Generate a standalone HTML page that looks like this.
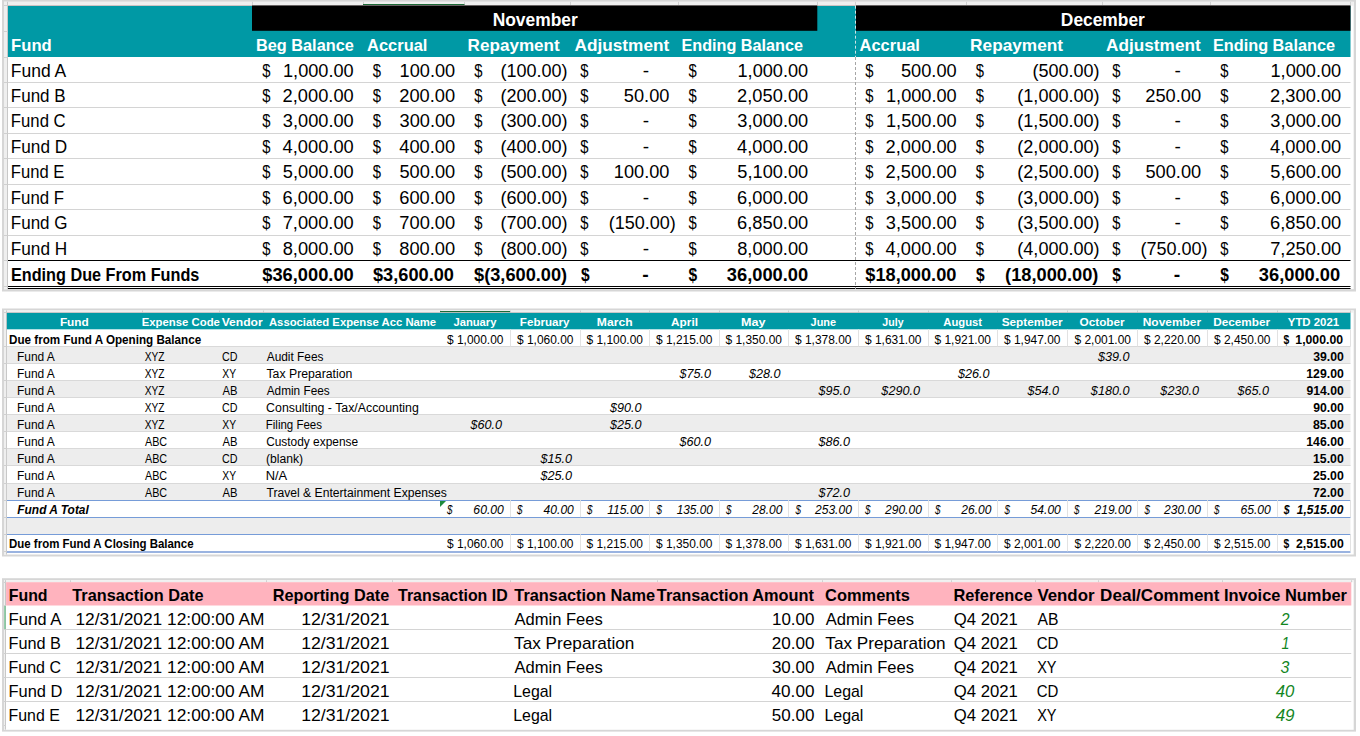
<!DOCTYPE html>
<html><head><meta charset="utf-8"><style>
html,body{margin:0;padding:0;background:#fff;width:1360px;height:736px;overflow:hidden}
svg{display:block}
text{font-family:"Liberation Sans",sans-serif}
</style></head><body>
<svg width="1360" height="736" viewBox="0 0 1360 736">
<rect x="2.00" y="0.00" width="1354.00" height="291.50" fill="#d6d6d6"/>
<rect x="4.00" y="1.80" width="1349.70" height="287.40" fill="#ffffff"/>
<rect x="4.00" y="1.80" width="1349.70" height="3.90" fill="#efefef"/>
<rect x="4.00" y="1.80" width="3.50" height="287.40" fill="#efefef"/>
<rect x="252.00" y="1.80" width="1.00" height="3.90" fill="#d0d0d0"/>
<rect x="363.00" y="1.80" width="1.00" height="3.90" fill="#d0d0d0"/>
<rect x="464.00" y="1.80" width="1.00" height="3.90" fill="#d0d0d0"/>
<rect x="570.00" y="1.80" width="1.00" height="3.90" fill="#d0d0d0"/>
<rect x="678.00" y="1.80" width="1.00" height="3.90" fill="#d0d0d0"/>
<rect x="817.00" y="1.80" width="1.00" height="3.90" fill="#d0d0d0"/>
<rect x="855.00" y="1.80" width="1.00" height="3.90" fill="#d0d0d0"/>
<rect x="966.00" y="1.80" width="1.00" height="3.90" fill="#d0d0d0"/>
<rect x="1102.00" y="1.80" width="1.00" height="3.90" fill="#d0d0d0"/>
<rect x="1210.00" y="1.80" width="1.00" height="3.90" fill="#d0d0d0"/>
<rect x="1350.00" y="1.80" width="1.00" height="3.90" fill="#d0d0d0"/>
<rect x="363.00" y="4.00" width="101.50" height="1.70" fill="#1d6b38"/>
<rect x="7.00" y="1.80" width="1.00" height="287.40" fill="#c8c8c8"/>
<rect x="8.00" y="6.00" width="1342.50" height="51.00" fill="#0099a5"/>
<rect x="8.00" y="5.00" width="1342.50" height="1.00" fill="#cdc3c3"/>
<rect x="252.00" y="5.50" width="565.30" height="25.30" fill="#000"/>
<rect x="856.00" y="5.50" width="494.50" height="25.30" fill="#000"/>
<rect x="8.00" y="82.00" width="1342.50" height="1.00" fill="#d4d4d4"/>
<rect x="4.00" y="82.00" width="3.50" height="1.00" fill="#d0d0d0"/>
<rect x="8.00" y="107.00" width="1342.50" height="1.00" fill="#d4d4d4"/>
<rect x="4.00" y="107.00" width="3.50" height="1.00" fill="#d0d0d0"/>
<rect x="8.00" y="133.00" width="1342.50" height="1.00" fill="#d4d4d4"/>
<rect x="4.00" y="133.00" width="3.50" height="1.00" fill="#d0d0d0"/>
<rect x="8.00" y="158.00" width="1342.50" height="1.00" fill="#d4d4d4"/>
<rect x="4.00" y="158.00" width="3.50" height="1.00" fill="#d0d0d0"/>
<rect x="8.00" y="184.00" width="1342.50" height="1.00" fill="#d4d4d4"/>
<rect x="4.00" y="184.00" width="3.50" height="1.00" fill="#d0d0d0"/>
<rect x="8.00" y="209.00" width="1342.50" height="1.00" fill="#d4d4d4"/>
<rect x="4.00" y="209.00" width="3.50" height="1.00" fill="#d0d0d0"/>
<rect x="8.00" y="235.00" width="1342.50" height="1.00" fill="#d4d4d4"/>
<rect x="4.00" y="235.00" width="3.50" height="1.00" fill="#d0d0d0"/>
<rect x="4.00" y="5.00" width="3.50" height="1.00" fill="#d0d0d0"/>
<rect x="4.00" y="31.00" width="3.50" height="1.00" fill="#d0d0d0"/>
<rect x="4.00" y="57.00" width="3.50" height="1.00" fill="#d0d0d0"/>
<rect x="4.00" y="260.00" width="3.50" height="1.00" fill="#d0d0d0"/>
<rect x="4.00" y="286.00" width="3.50" height="1.00" fill="#d0d0d0"/>
<rect x="8.00" y="260.00" width="1342.50" height="1.00" fill="#000"/>
<rect x="8.00" y="286.00" width="1342.50" height="1.00" fill="#000"/>
<rect x="8.00" y="288.00" width="1342.50" height="1.00" fill="#000"/>
<line x1="855.5" y1="5.7" x2="855.5" y2="57" stroke="#cfe3e5" stroke-width="1" stroke-dasharray="3,2"/>
<line x1="855.5" y1="57" x2="855.5" y2="289" stroke="#a6a6a6" stroke-width="1" stroke-dasharray="3,2"/>
<text x="492.63" y="25.60" font-size="17.5" textLength="85.18" lengthAdjust="spacingAndGlyphs" fill="#fff" font-weight="bold">November</text>
<text x="1060.84" y="25.60" font-size="17.5" textLength="84.03" lengthAdjust="spacingAndGlyphs" fill="#fff" font-weight="bold">December</text>
<text x="11.09" y="50.90" font-size="16.5" textLength="40.61" lengthAdjust="spacingAndGlyphs" fill="#fff" font-weight="bold">Fund</text>
<text x="255.91" y="50.90" font-size="16.5" textLength="97.90" lengthAdjust="spacingAndGlyphs" fill="#fff" font-weight="bold">Beg Balance</text>
<text x="367.09" y="50.90" font-size="16.5" textLength="60.32" lengthAdjust="spacingAndGlyphs" fill="#fff" font-weight="bold">Accrual</text>
<text x="467.61" y="50.90" font-size="16.5" textLength="92.10" lengthAdjust="spacingAndGlyphs" fill="#fff" font-weight="bold">Repayment</text>
<text x="574.57" y="50.90" font-size="16.5" textLength="94.64" lengthAdjust="spacingAndGlyphs" fill="#fff" font-weight="bold">Adjustment</text>
<text x="681.42" y="50.90" font-size="16.5" textLength="121.64" lengthAdjust="spacingAndGlyphs" fill="#fff" font-weight="bold">Ending Balance</text>
<text x="859.59" y="50.90" font-size="16.5" textLength="60.30" lengthAdjust="spacingAndGlyphs" fill="#fff" font-weight="bold">Accrual</text>
<text x="970.10" y="50.90" font-size="16.5" textLength="92.98" lengthAdjust="spacingAndGlyphs" fill="#fff" font-weight="bold">Repayment</text>
<text x="1106.07" y="50.90" font-size="16.5" textLength="94.64" lengthAdjust="spacingAndGlyphs" fill="#fff" font-weight="bold">Adjustment</text>
<text x="1212.91" y="50.90" font-size="16.5" textLength="122.15" lengthAdjust="spacingAndGlyphs" fill="#fff" font-weight="bold">Ending Balance</text>
<text x="10.79" y="76.50" font-size="17.5" textLength="55.45" lengthAdjust="spacingAndGlyphs" fill="#000">Fund A</text>
<text x="262.34" y="76.50" font-size="17.5" textLength="8.21" lengthAdjust="spacingAndGlyphs" fill="#000">$</text>
<text x="283.00" y="76.50" font-size="17.5" textLength="70.71" lengthAdjust="spacingAndGlyphs" fill="#000">1,000.00</text>
<text x="372.84" y="76.50" font-size="17.5" textLength="8.21" lengthAdjust="spacingAndGlyphs" fill="#000">$</text>
<text x="399.63" y="76.50" font-size="17.5" textLength="55.58" lengthAdjust="spacingAndGlyphs" fill="#000">100.00</text>
<text x="474.34" y="76.50" font-size="17.5" textLength="8.21" lengthAdjust="spacingAndGlyphs" fill="#000">$</text>
<text x="500.45" y="76.50" font-size="17.5" textLength="67.17" lengthAdjust="spacingAndGlyphs" fill="#000">(100.00)</text>
<text x="580.34" y="76.50" font-size="17.5" textLength="8.21" lengthAdjust="spacingAndGlyphs" fill="#000">$</text>
<text x="642.73" y="76.50" font-size="17.5" textLength="6.37" lengthAdjust="spacingAndGlyphs" fill="#000">-</text>
<text x="688.59" y="76.50" font-size="17.5" textLength="8.21" lengthAdjust="spacingAndGlyphs" fill="#000">$</text>
<text x="737.50" y="76.50" font-size="17.5" textLength="70.71" lengthAdjust="spacingAndGlyphs" fill="#000">1,000.00</text>
<text x="865.14" y="76.50" font-size="17.5" textLength="8.21" lengthAdjust="spacingAndGlyphs" fill="#000">$</text>
<text x="900.96" y="76.50" font-size="17.5" textLength="55.75" lengthAdjust="spacingAndGlyphs" fill="#000">500.00</text>
<text x="975.84" y="76.50" font-size="17.5" textLength="8.21" lengthAdjust="spacingAndGlyphs" fill="#000">$</text>
<text x="1032.45" y="76.50" font-size="17.5" textLength="67.17" lengthAdjust="spacingAndGlyphs" fill="#000">(500.00)</text>
<text x="1112.34" y="76.50" font-size="17.5" textLength="8.21" lengthAdjust="spacingAndGlyphs" fill="#000">$</text>
<text x="1174.48" y="76.50" font-size="17.5" textLength="6.37" lengthAdjust="spacingAndGlyphs" fill="#000">-</text>
<text x="1220.34" y="76.50" font-size="17.5" textLength="8.21" lengthAdjust="spacingAndGlyphs" fill="#000">$</text>
<text x="1270.50" y="76.50" font-size="17.5" textLength="70.71" lengthAdjust="spacingAndGlyphs" fill="#000">1,000.00</text>
<text x="10.80" y="101.94" font-size="17.5" textLength="54.85" lengthAdjust="spacingAndGlyphs" fill="#000">Fund B</text>
<text x="262.34" y="101.94" font-size="17.5" textLength="8.21" lengthAdjust="spacingAndGlyphs" fill="#000">$</text>
<text x="282.64" y="101.94" font-size="17.5" textLength="71.07" lengthAdjust="spacingAndGlyphs" fill="#000">2,000.00</text>
<text x="372.84" y="101.94" font-size="17.5" textLength="8.21" lengthAdjust="spacingAndGlyphs" fill="#000">$</text>
<text x="399.26" y="101.94" font-size="17.5" textLength="55.95" lengthAdjust="spacingAndGlyphs" fill="#000">200.00</text>
<text x="474.34" y="101.94" font-size="17.5" textLength="8.21" lengthAdjust="spacingAndGlyphs" fill="#000">$</text>
<text x="500.45" y="101.94" font-size="17.5" textLength="67.17" lengthAdjust="spacingAndGlyphs" fill="#000">(200.00)</text>
<text x="580.34" y="101.94" font-size="17.5" textLength="8.21" lengthAdjust="spacingAndGlyphs" fill="#000">$</text>
<text x="623.85" y="101.94" font-size="17.5" textLength="45.61" lengthAdjust="spacingAndGlyphs" fill="#000">50.00</text>
<text x="688.59" y="101.94" font-size="17.5" textLength="8.21" lengthAdjust="spacingAndGlyphs" fill="#000">$</text>
<text x="737.14" y="101.94" font-size="17.5" textLength="71.07" lengthAdjust="spacingAndGlyphs" fill="#000">2,050.00</text>
<text x="865.14" y="101.94" font-size="17.5" textLength="8.21" lengthAdjust="spacingAndGlyphs" fill="#000">$</text>
<text x="886.00" y="101.94" font-size="17.5" textLength="70.71" lengthAdjust="spacingAndGlyphs" fill="#000">1,000.00</text>
<text x="975.84" y="101.94" font-size="17.5" textLength="8.21" lengthAdjust="spacingAndGlyphs" fill="#000">$</text>
<text x="1017.32" y="101.94" font-size="17.5" textLength="82.30" lengthAdjust="spacingAndGlyphs" fill="#000">(1,000.00)</text>
<text x="1112.34" y="101.94" font-size="17.5" textLength="8.21" lengthAdjust="spacingAndGlyphs" fill="#000">$</text>
<text x="1145.26" y="101.94" font-size="17.5" textLength="55.95" lengthAdjust="spacingAndGlyphs" fill="#000">250.00</text>
<text x="1220.34" y="101.94" font-size="17.5" textLength="8.21" lengthAdjust="spacingAndGlyphs" fill="#000">$</text>
<text x="1270.14" y="101.94" font-size="17.5" textLength="71.07" lengthAdjust="spacingAndGlyphs" fill="#000">2,300.00</text>
<text x="10.83" y="127.38" font-size="17.5" textLength="54.81" lengthAdjust="spacingAndGlyphs" fill="#000">Fund C</text>
<text x="262.34" y="127.38" font-size="17.5" textLength="8.21" lengthAdjust="spacingAndGlyphs" fill="#000">$</text>
<text x="282.89" y="127.38" font-size="17.5" textLength="70.82" lengthAdjust="spacingAndGlyphs" fill="#000">3,000.00</text>
<text x="372.84" y="127.38" font-size="17.5" textLength="8.21" lengthAdjust="spacingAndGlyphs" fill="#000">$</text>
<text x="399.52" y="127.38" font-size="17.5" textLength="55.69" lengthAdjust="spacingAndGlyphs" fill="#000">300.00</text>
<text x="474.34" y="127.38" font-size="17.5" textLength="8.21" lengthAdjust="spacingAndGlyphs" fill="#000">$</text>
<text x="500.45" y="127.38" font-size="17.5" textLength="67.17" lengthAdjust="spacingAndGlyphs" fill="#000">(300.00)</text>
<text x="580.34" y="127.38" font-size="17.5" textLength="8.21" lengthAdjust="spacingAndGlyphs" fill="#000">$</text>
<text x="642.73" y="127.38" font-size="17.5" textLength="6.37" lengthAdjust="spacingAndGlyphs" fill="#000">-</text>
<text x="688.59" y="127.38" font-size="17.5" textLength="8.21" lengthAdjust="spacingAndGlyphs" fill="#000">$</text>
<text x="737.39" y="127.38" font-size="17.5" textLength="70.82" lengthAdjust="spacingAndGlyphs" fill="#000">3,000.00</text>
<text x="865.14" y="127.38" font-size="17.5" textLength="8.21" lengthAdjust="spacingAndGlyphs" fill="#000">$</text>
<text x="886.00" y="127.38" font-size="17.5" textLength="70.71" lengthAdjust="spacingAndGlyphs" fill="#000">1,500.00</text>
<text x="975.84" y="127.38" font-size="17.5" textLength="8.21" lengthAdjust="spacingAndGlyphs" fill="#000">$</text>
<text x="1017.32" y="127.38" font-size="17.5" textLength="82.30" lengthAdjust="spacingAndGlyphs" fill="#000">(1,500.00)</text>
<text x="1112.34" y="127.38" font-size="17.5" textLength="8.21" lengthAdjust="spacingAndGlyphs" fill="#000">$</text>
<text x="1174.48" y="127.38" font-size="17.5" textLength="6.37" lengthAdjust="spacingAndGlyphs" fill="#000">-</text>
<text x="1220.34" y="127.38" font-size="17.5" textLength="8.21" lengthAdjust="spacingAndGlyphs" fill="#000">$</text>
<text x="1270.39" y="127.38" font-size="17.5" textLength="70.82" lengthAdjust="spacingAndGlyphs" fill="#000">3,000.00</text>
<text x="10.79" y="152.82" font-size="17.5" textLength="56.37" lengthAdjust="spacingAndGlyphs" fill="#000">Fund D</text>
<text x="262.34" y="152.82" font-size="17.5" textLength="8.21" lengthAdjust="spacingAndGlyphs" fill="#000">$</text>
<text x="282.58" y="152.82" font-size="17.5" textLength="71.13" lengthAdjust="spacingAndGlyphs" fill="#000">4,000.00</text>
<text x="372.84" y="152.82" font-size="17.5" textLength="8.21" lengthAdjust="spacingAndGlyphs" fill="#000">$</text>
<text x="399.21" y="152.82" font-size="17.5" textLength="56.01" lengthAdjust="spacingAndGlyphs" fill="#000">400.00</text>
<text x="474.34" y="152.82" font-size="17.5" textLength="8.21" lengthAdjust="spacingAndGlyphs" fill="#000">$</text>
<text x="500.45" y="152.82" font-size="17.5" textLength="67.17" lengthAdjust="spacingAndGlyphs" fill="#000">(400.00)</text>
<text x="580.34" y="152.82" font-size="17.5" textLength="8.21" lengthAdjust="spacingAndGlyphs" fill="#000">$</text>
<text x="642.73" y="152.82" font-size="17.5" textLength="6.37" lengthAdjust="spacingAndGlyphs" fill="#000">-</text>
<text x="688.59" y="152.82" font-size="17.5" textLength="8.21" lengthAdjust="spacingAndGlyphs" fill="#000">$</text>
<text x="737.08" y="152.82" font-size="17.5" textLength="71.13" lengthAdjust="spacingAndGlyphs" fill="#000">4,000.00</text>
<text x="865.14" y="152.82" font-size="17.5" textLength="8.21" lengthAdjust="spacingAndGlyphs" fill="#000">$</text>
<text x="885.64" y="152.82" font-size="17.5" textLength="71.07" lengthAdjust="spacingAndGlyphs" fill="#000">2,000.00</text>
<text x="975.84" y="152.82" font-size="17.5" textLength="8.21" lengthAdjust="spacingAndGlyphs" fill="#000">$</text>
<text x="1017.32" y="152.82" font-size="17.5" textLength="82.30" lengthAdjust="spacingAndGlyphs" fill="#000">(2,000.00)</text>
<text x="1112.34" y="152.82" font-size="17.5" textLength="8.21" lengthAdjust="spacingAndGlyphs" fill="#000">$</text>
<text x="1174.48" y="152.82" font-size="17.5" textLength="6.37" lengthAdjust="spacingAndGlyphs" fill="#000">-</text>
<text x="1220.34" y="152.82" font-size="17.5" textLength="8.21" lengthAdjust="spacingAndGlyphs" fill="#000">$</text>
<text x="1270.08" y="152.82" font-size="17.5" textLength="71.13" lengthAdjust="spacingAndGlyphs" fill="#000">4,000.00</text>
<text x="10.84" y="178.26" font-size="17.5" textLength="53.57" lengthAdjust="spacingAndGlyphs" fill="#000">Fund E</text>
<text x="262.34" y="178.26" font-size="17.5" textLength="8.21" lengthAdjust="spacingAndGlyphs" fill="#000">$</text>
<text x="282.84" y="178.26" font-size="17.5" textLength="70.87" lengthAdjust="spacingAndGlyphs" fill="#000">5,000.00</text>
<text x="372.84" y="178.26" font-size="17.5" textLength="8.21" lengthAdjust="spacingAndGlyphs" fill="#000">$</text>
<text x="399.46" y="178.26" font-size="17.5" textLength="55.75" lengthAdjust="spacingAndGlyphs" fill="#000">500.00</text>
<text x="474.34" y="178.26" font-size="17.5" textLength="8.21" lengthAdjust="spacingAndGlyphs" fill="#000">$</text>
<text x="500.45" y="178.26" font-size="17.5" textLength="67.17" lengthAdjust="spacingAndGlyphs" fill="#000">(500.00)</text>
<text x="580.34" y="178.26" font-size="17.5" textLength="8.21" lengthAdjust="spacingAndGlyphs" fill="#000">$</text>
<text x="613.88" y="178.26" font-size="17.5" textLength="55.58" lengthAdjust="spacingAndGlyphs" fill="#000">100.00</text>
<text x="688.59" y="178.26" font-size="17.5" textLength="8.21" lengthAdjust="spacingAndGlyphs" fill="#000">$</text>
<text x="737.34" y="178.26" font-size="17.5" textLength="70.87" lengthAdjust="spacingAndGlyphs" fill="#000">5,100.00</text>
<text x="865.14" y="178.26" font-size="17.5" textLength="8.21" lengthAdjust="spacingAndGlyphs" fill="#000">$</text>
<text x="885.64" y="178.26" font-size="17.5" textLength="71.07" lengthAdjust="spacingAndGlyphs" fill="#000">2,500.00</text>
<text x="975.84" y="178.26" font-size="17.5" textLength="8.21" lengthAdjust="spacingAndGlyphs" fill="#000">$</text>
<text x="1017.32" y="178.26" font-size="17.5" textLength="82.30" lengthAdjust="spacingAndGlyphs" fill="#000">(2,500.00)</text>
<text x="1112.34" y="178.26" font-size="17.5" textLength="8.21" lengthAdjust="spacingAndGlyphs" fill="#000">$</text>
<text x="1145.46" y="178.26" font-size="17.5" textLength="55.75" lengthAdjust="spacingAndGlyphs" fill="#000">500.00</text>
<text x="1220.34" y="178.26" font-size="17.5" textLength="8.21" lengthAdjust="spacingAndGlyphs" fill="#000">$</text>
<text x="1270.34" y="178.26" font-size="17.5" textLength="70.87" lengthAdjust="spacingAndGlyphs" fill="#000">5,600.00</text>
<text x="10.82" y="203.70" font-size="17.5" textLength="53.24" lengthAdjust="spacingAndGlyphs" fill="#000">Fund F</text>
<text x="262.34" y="203.70" font-size="17.5" textLength="8.21" lengthAdjust="spacingAndGlyphs" fill="#000">$</text>
<text x="282.63" y="203.70" font-size="17.5" textLength="71.08" lengthAdjust="spacingAndGlyphs" fill="#000">6,000.00</text>
<text x="372.84" y="203.70" font-size="17.5" textLength="8.21" lengthAdjust="spacingAndGlyphs" fill="#000">$</text>
<text x="399.25" y="203.70" font-size="17.5" textLength="55.96" lengthAdjust="spacingAndGlyphs" fill="#000">600.00</text>
<text x="474.34" y="203.70" font-size="17.5" textLength="8.21" lengthAdjust="spacingAndGlyphs" fill="#000">$</text>
<text x="500.45" y="203.70" font-size="17.5" textLength="67.17" lengthAdjust="spacingAndGlyphs" fill="#000">(600.00)</text>
<text x="580.34" y="203.70" font-size="17.5" textLength="8.21" lengthAdjust="spacingAndGlyphs" fill="#000">$</text>
<text x="642.73" y="203.70" font-size="17.5" textLength="6.37" lengthAdjust="spacingAndGlyphs" fill="#000">-</text>
<text x="688.59" y="203.70" font-size="17.5" textLength="8.21" lengthAdjust="spacingAndGlyphs" fill="#000">$</text>
<text x="737.13" y="203.70" font-size="17.5" textLength="71.08" lengthAdjust="spacingAndGlyphs" fill="#000">6,000.00</text>
<text x="865.14" y="203.70" font-size="17.5" textLength="8.21" lengthAdjust="spacingAndGlyphs" fill="#000">$</text>
<text x="885.89" y="203.70" font-size="17.5" textLength="70.82" lengthAdjust="spacingAndGlyphs" fill="#000">3,000.00</text>
<text x="975.84" y="203.70" font-size="17.5" textLength="8.21" lengthAdjust="spacingAndGlyphs" fill="#000">$</text>
<text x="1017.32" y="203.70" font-size="17.5" textLength="82.30" lengthAdjust="spacingAndGlyphs" fill="#000">(3,000.00)</text>
<text x="1112.34" y="203.70" font-size="17.5" textLength="8.21" lengthAdjust="spacingAndGlyphs" fill="#000">$</text>
<text x="1174.48" y="203.70" font-size="17.5" textLength="6.37" lengthAdjust="spacingAndGlyphs" fill="#000">-</text>
<text x="1220.34" y="203.70" font-size="17.5" textLength="8.21" lengthAdjust="spacingAndGlyphs" fill="#000">$</text>
<text x="1270.13" y="203.70" font-size="17.5" textLength="71.08" lengthAdjust="spacingAndGlyphs" fill="#000">6,000.00</text>
<text x="10.80" y="229.14" font-size="17.5" textLength="56.74" lengthAdjust="spacingAndGlyphs" fill="#000">Fund G</text>
<text x="262.34" y="229.14" font-size="17.5" textLength="8.21" lengthAdjust="spacingAndGlyphs" fill="#000">$</text>
<text x="282.68" y="229.14" font-size="17.5" textLength="71.03" lengthAdjust="spacingAndGlyphs" fill="#000">7,000.00</text>
<text x="372.84" y="229.14" font-size="17.5" textLength="8.21" lengthAdjust="spacingAndGlyphs" fill="#000">$</text>
<text x="399.31" y="229.14" font-size="17.5" textLength="55.91" lengthAdjust="spacingAndGlyphs" fill="#000">700.00</text>
<text x="474.34" y="229.14" font-size="17.5" textLength="8.21" lengthAdjust="spacingAndGlyphs" fill="#000">$</text>
<text x="500.45" y="229.14" font-size="17.5" textLength="67.17" lengthAdjust="spacingAndGlyphs" fill="#000">(700.00)</text>
<text x="580.34" y="229.14" font-size="17.5" textLength="8.21" lengthAdjust="spacingAndGlyphs" fill="#000">$</text>
<text x="608.70" y="229.14" font-size="17.5" textLength="67.17" lengthAdjust="spacingAndGlyphs" fill="#000">(150.00)</text>
<text x="688.59" y="229.14" font-size="17.5" textLength="8.21" lengthAdjust="spacingAndGlyphs" fill="#000">$</text>
<text x="737.13" y="229.14" font-size="17.5" textLength="71.08" lengthAdjust="spacingAndGlyphs" fill="#000">6,850.00</text>
<text x="865.14" y="229.14" font-size="17.5" textLength="8.21" lengthAdjust="spacingAndGlyphs" fill="#000">$</text>
<text x="885.89" y="229.14" font-size="17.5" textLength="70.82" lengthAdjust="spacingAndGlyphs" fill="#000">3,500.00</text>
<text x="975.84" y="229.14" font-size="17.5" textLength="8.21" lengthAdjust="spacingAndGlyphs" fill="#000">$</text>
<text x="1017.32" y="229.14" font-size="17.5" textLength="82.30" lengthAdjust="spacingAndGlyphs" fill="#000">(3,500.00)</text>
<text x="1112.34" y="229.14" font-size="17.5" textLength="8.21" lengthAdjust="spacingAndGlyphs" fill="#000">$</text>
<text x="1174.48" y="229.14" font-size="17.5" textLength="6.37" lengthAdjust="spacingAndGlyphs" fill="#000">-</text>
<text x="1220.34" y="229.14" font-size="17.5" textLength="8.21" lengthAdjust="spacingAndGlyphs" fill="#000">$</text>
<text x="1270.13" y="229.14" font-size="17.5" textLength="71.08" lengthAdjust="spacingAndGlyphs" fill="#000">6,850.00</text>
<text x="10.79" y="254.58" font-size="17.5" textLength="56.42" lengthAdjust="spacingAndGlyphs" fill="#000">Fund H</text>
<text x="262.34" y="254.58" font-size="17.5" textLength="8.21" lengthAdjust="spacingAndGlyphs" fill="#000">$</text>
<text x="282.67" y="254.58" font-size="17.5" textLength="71.05" lengthAdjust="spacingAndGlyphs" fill="#000">8,000.00</text>
<text x="372.84" y="254.58" font-size="17.5" textLength="8.21" lengthAdjust="spacingAndGlyphs" fill="#000">$</text>
<text x="399.29" y="254.58" font-size="17.5" textLength="55.92" lengthAdjust="spacingAndGlyphs" fill="#000">800.00</text>
<text x="474.34" y="254.58" font-size="17.5" textLength="8.21" lengthAdjust="spacingAndGlyphs" fill="#000">$</text>
<text x="500.45" y="254.58" font-size="17.5" textLength="67.17" lengthAdjust="spacingAndGlyphs" fill="#000">(800.00)</text>
<text x="580.34" y="254.58" font-size="17.5" textLength="8.21" lengthAdjust="spacingAndGlyphs" fill="#000">$</text>
<text x="642.73" y="254.58" font-size="17.5" textLength="6.37" lengthAdjust="spacingAndGlyphs" fill="#000">-</text>
<text x="688.59" y="254.58" font-size="17.5" textLength="8.21" lengthAdjust="spacingAndGlyphs" fill="#000">$</text>
<text x="737.17" y="254.58" font-size="17.5" textLength="71.05" lengthAdjust="spacingAndGlyphs" fill="#000">8,000.00</text>
<text x="865.14" y="254.58" font-size="17.5" textLength="8.21" lengthAdjust="spacingAndGlyphs" fill="#000">$</text>
<text x="885.58" y="254.58" font-size="17.5" textLength="71.13" lengthAdjust="spacingAndGlyphs" fill="#000">4,000.00</text>
<text x="975.84" y="254.58" font-size="17.5" textLength="8.21" lengthAdjust="spacingAndGlyphs" fill="#000">$</text>
<text x="1017.32" y="254.58" font-size="17.5" textLength="82.30" lengthAdjust="spacingAndGlyphs" fill="#000">(4,000.00)</text>
<text x="1112.34" y="254.58" font-size="17.5" textLength="8.21" lengthAdjust="spacingAndGlyphs" fill="#000">$</text>
<text x="1140.45" y="254.58" font-size="17.5" textLength="67.17" lengthAdjust="spacingAndGlyphs" fill="#000">(750.00)</text>
<text x="1220.34" y="254.58" font-size="17.5" textLength="8.21" lengthAdjust="spacingAndGlyphs" fill="#000">$</text>
<text x="1270.18" y="254.58" font-size="17.5" textLength="71.03" lengthAdjust="spacingAndGlyphs" fill="#000">7,250.00</text>
<text x="10.91" y="280.70" font-size="17.5" textLength="188.45" lengthAdjust="spacingAndGlyphs" fill="#000" font-weight="bold">Ending Due From Funds</text>
<text x="262.26" y="280.70" font-size="17.5" textLength="91.49" lengthAdjust="spacingAndGlyphs" fill="#000" font-weight="bold">$36,000.00</text>
<text x="373.01" y="280.70" font-size="17.5" textLength="80.99" lengthAdjust="spacingAndGlyphs" fill="#000" font-weight="bold">$3,600.00</text>
<text x="474.01" y="280.70" font-size="17.5" textLength="93.15" lengthAdjust="spacingAndGlyphs" fill="#000" font-weight="bold">$(3,600.00)</text>
<text x="581.04" y="280.70" font-size="17.5" textLength="8.66" lengthAdjust="spacingAndGlyphs" fill="#000" font-weight="bold">$</text>
<text x="642.31" y="280.70" font-size="17.5" textLength="6.47" lengthAdjust="spacingAndGlyphs" fill="#000" font-weight="bold">-</text>
<text x="688.54" y="280.70" font-size="17.5" textLength="8.66" lengthAdjust="spacingAndGlyphs" fill="#000" font-weight="bold">$</text>
<text x="726.78" y="280.70" font-size="17.5" textLength="81.47" lengthAdjust="spacingAndGlyphs" fill="#000" font-weight="bold">36,000.00</text>
<text x="865.26" y="280.70" font-size="17.5" textLength="91.20" lengthAdjust="spacingAndGlyphs" fill="#000" font-weight="bold">$18,000.00</text>
<text x="976.04" y="280.70" font-size="17.5" textLength="8.66" lengthAdjust="spacingAndGlyphs" fill="#000" font-weight="bold">$</text>
<text x="1005.12" y="280.70" font-size="17.5" textLength="93.29" lengthAdjust="spacingAndGlyphs" fill="#000" font-weight="bold">(18,000.00)</text>
<text x="1112.29" y="280.70" font-size="17.5" textLength="8.66" lengthAdjust="spacingAndGlyphs" fill="#000" font-weight="bold">$</text>
<text x="1173.81" y="280.70" font-size="17.5" textLength="6.47" lengthAdjust="spacingAndGlyphs" fill="#000" font-weight="bold">-</text>
<text x="1220.29" y="280.70" font-size="17.5" textLength="8.66" lengthAdjust="spacingAndGlyphs" fill="#000" font-weight="bold">$</text>
<text x="1258.78" y="280.70" font-size="17.5" textLength="81.47" lengthAdjust="spacingAndGlyphs" fill="#000" font-weight="bold">36,000.00</text>
<rect x="2.00" y="308.50" width="1354.00" height="248.00" fill="#d6d6d6"/>
<rect x="4.00" y="310.50" width="1349.70" height="244.00" fill="#ffffff"/>
<rect x="4.00" y="310.50" width="1349.70" height="2.20" fill="#efefef"/>
<rect x="4.00" y="310.50" width="2.60" height="244.00" fill="#efefef"/>
<rect x="142.00" y="310.50" width="1.00" height="2.20" fill="#d0d0d0"/>
<rect x="219.00" y="310.50" width="1.00" height="2.20" fill="#d0d0d0"/>
<rect x="263.00" y="310.50" width="1.00" height="2.20" fill="#d0d0d0"/>
<rect x="440.00" y="310.50" width="1.00" height="2.20" fill="#d0d0d0"/>
<rect x="510.00" y="310.50" width="1.00" height="2.20" fill="#d0d0d0"/>
<rect x="580.00" y="310.50" width="1.00" height="2.20" fill="#d0d0d0"/>
<rect x="649.00" y="310.50" width="1.00" height="2.20" fill="#d0d0d0"/>
<rect x="719.00" y="310.50" width="1.00" height="2.20" fill="#d0d0d0"/>
<rect x="788.00" y="310.50" width="1.00" height="2.20" fill="#d0d0d0"/>
<rect x="858.00" y="310.50" width="1.00" height="2.20" fill="#d0d0d0"/>
<rect x="928.00" y="310.50" width="1.00" height="2.20" fill="#d0d0d0"/>
<rect x="997.00" y="310.50" width="1.00" height="2.20" fill="#d0d0d0"/>
<rect x="1067.00" y="310.50" width="1.00" height="2.20" fill="#d0d0d0"/>
<rect x="1137.00" y="310.50" width="1.00" height="2.20" fill="#d0d0d0"/>
<rect x="1207.00" y="310.50" width="1.00" height="2.20" fill="#d0d0d0"/>
<rect x="1277.00" y="310.50" width="1.00" height="2.20" fill="#d0d0d0"/>
<rect x="1350.00" y="310.50" width="1.00" height="2.20" fill="#d0d0d0"/>
<rect x="440.00" y="311.00" width="70.00" height="1.60" fill="#1d6b38"/>
<rect x="6.00" y="310.50" width="1.00" height="244.00" fill="#c8c8c8"/>
<rect x="6.90" y="312.70" width="1343.60" height="16.60" fill="#0099a5"/>
<rect x="6.90" y="312.00" width="1343.60" height="0.80" fill="#cdc3c3"/>
<text x="59.91" y="326.40" font-size="11.3" textLength="28.87" lengthAdjust="spacingAndGlyphs" fill="#fff" font-weight="bold">Fund</text>
<text x="141.74" y="326.40" font-size="11.3" textLength="78.15" lengthAdjust="spacingAndGlyphs" fill="#fff" font-weight="bold">Expense Code</text>
<text x="221.67" y="326.40" font-size="11.3" textLength="41.01" lengthAdjust="spacingAndGlyphs" fill="#fff" font-weight="bold">Vendor</text>
<text x="268.97" y="326.40" font-size="11.3" textLength="167.17" lengthAdjust="spacingAndGlyphs" fill="#fff" font-weight="bold">Associated Expense Acc Name</text>
<text x="453.44" y="326.40" font-size="11.3" textLength="43.01" lengthAdjust="spacingAndGlyphs" fill="#fff" font-weight="bold">January</text>
<text x="519.86" y="326.40" font-size="11.3" textLength="49.57" lengthAdjust="spacingAndGlyphs" fill="#fff" font-weight="bold">February</text>
<text x="596.89" y="326.40" font-size="11.3" textLength="35.67" lengthAdjust="spacingAndGlyphs" fill="#fff" font-weight="bold">March</text>
<text x="671.12" y="326.40" font-size="11.3" textLength="26.81" lengthAdjust="spacingAndGlyphs" fill="#fff" font-weight="bold">April</text>
<text x="741.12" y="326.40" font-size="11.3" textLength="24.48" lengthAdjust="spacingAndGlyphs" fill="#fff" font-weight="bold">May</text>
<text x="810.62" y="326.40" font-size="11.3" textLength="25.47" lengthAdjust="spacingAndGlyphs" fill="#fff" font-weight="bold">June</text>
<text x="882.34" y="326.40" font-size="11.3" textLength="21.21" lengthAdjust="spacingAndGlyphs" fill="#fff" font-weight="bold">July</text>
<text x="943.26" y="326.40" font-size="11.3" textLength="38.84" lengthAdjust="spacingAndGlyphs" fill="#fff" font-weight="bold">August</text>
<text x="1001.66" y="326.40" font-size="11.3" textLength="61.02" lengthAdjust="spacingAndGlyphs" fill="#fff" font-weight="bold">September</text>
<text x="1079.53" y="326.40" font-size="11.3" textLength="45.14" lengthAdjust="spacingAndGlyphs" fill="#fff" font-weight="bold">October</text>
<text x="1142.74" y="326.40" font-size="11.3" textLength="58.40" lengthAdjust="spacingAndGlyphs" fill="#fff" font-weight="bold">November</text>
<text x="1213.26" y="326.40" font-size="11.3" textLength="56.86" lengthAdjust="spacingAndGlyphs" fill="#fff" font-weight="bold">December</text>
<text x="1287.81" y="326.40" font-size="11.3" textLength="51.26" lengthAdjust="spacingAndGlyphs" fill="#fff" font-weight="bold">YTD 2021</text>
<rect x="6.90" y="346.50" width="1343.60" height="17.07" fill="#ededed"/>
<rect x="6.90" y="380.64" width="1343.60" height="17.07" fill="#ededed"/>
<rect x="6.90" y="414.78" width="1343.60" height="17.07" fill="#ededed"/>
<rect x="6.90" y="448.92" width="1343.60" height="17.07" fill="#ededed"/>
<rect x="6.90" y="483.06" width="1343.60" height="17.07" fill="#ededed"/>
<rect x="6.90" y="517.20" width="1343.60" height="17.07" fill="#ededed"/>
<rect x="6.90" y="346.00" width="1343.60" height="1.00" fill="#d9d9d9"/>
<rect x="6.90" y="363.00" width="1343.60" height="1.00" fill="#d9d9d9"/>
<rect x="6.90" y="380.00" width="1343.60" height="1.00" fill="#d9d9d9"/>
<rect x="6.90" y="397.00" width="1343.60" height="1.00" fill="#d9d9d9"/>
<rect x="6.90" y="414.00" width="1343.60" height="1.00" fill="#d9d9d9"/>
<rect x="6.90" y="431.00" width="1343.60" height="1.00" fill="#d9d9d9"/>
<rect x="6.90" y="448.00" width="1343.60" height="1.00" fill="#d9d9d9"/>
<rect x="6.90" y="465.00" width="1343.60" height="1.00" fill="#d9d9d9"/>
<rect x="6.90" y="483.00" width="1343.60" height="1.00" fill="#d9d9d9"/>
<rect x="6.90" y="500.00" width="1343.60" height="1.00" fill="#769cd8"/>
<rect x="6.90" y="517.00" width="1343.60" height="1.00" fill="#769cd8"/>
<rect x="6.90" y="534.00" width="1343.60" height="1.00" fill="#769cd8"/>
<rect x="6.90" y="551.00" width="1343.60" height="2.00" fill="#9ab3e0"/>
<rect x="510.00" y="329.30" width="1.00" height="17.20" fill="#e2e2e2"/>
<rect x="580.00" y="329.30" width="1.00" height="17.20" fill="#e2e2e2"/>
<rect x="649.00" y="329.30" width="1.00" height="17.20" fill="#e2e2e2"/>
<rect x="719.00" y="329.30" width="1.00" height="17.20" fill="#e2e2e2"/>
<rect x="788.00" y="329.30" width="1.00" height="17.20" fill="#e2e2e2"/>
<rect x="858.00" y="329.30" width="1.00" height="17.20" fill="#e2e2e2"/>
<rect x="928.00" y="329.30" width="1.00" height="17.20" fill="#e2e2e2"/>
<rect x="997.00" y="329.30" width="1.00" height="17.20" fill="#e2e2e2"/>
<rect x="1067.00" y="329.30" width="1.00" height="17.20" fill="#e2e2e2"/>
<rect x="1137.00" y="329.30" width="1.00" height="17.20" fill="#e2e2e2"/>
<rect x="1207.00" y="329.30" width="1.00" height="17.20" fill="#e2e2e2"/>
<rect x="1277.00" y="329.30" width="1.00" height="17.20" fill="#e2e2e2"/>
<rect x="1350.00" y="329.30" width="1.00" height="17.20" fill="#e2e2e2"/>
<rect x="510.00" y="500.13" width="1.00" height="17.07" fill="#e2e2e2"/>
<rect x="580.00" y="500.13" width="1.00" height="17.07" fill="#e2e2e2"/>
<rect x="649.00" y="500.13" width="1.00" height="17.07" fill="#e2e2e2"/>
<rect x="719.00" y="500.13" width="1.00" height="17.07" fill="#e2e2e2"/>
<rect x="788.00" y="500.13" width="1.00" height="17.07" fill="#e2e2e2"/>
<rect x="858.00" y="500.13" width="1.00" height="17.07" fill="#e2e2e2"/>
<rect x="928.00" y="500.13" width="1.00" height="17.07" fill="#e2e2e2"/>
<rect x="997.00" y="500.13" width="1.00" height="17.07" fill="#e2e2e2"/>
<rect x="1067.00" y="500.13" width="1.00" height="17.07" fill="#e2e2e2"/>
<rect x="1137.00" y="500.13" width="1.00" height="17.07" fill="#e2e2e2"/>
<rect x="1207.00" y="500.13" width="1.00" height="17.07" fill="#e2e2e2"/>
<rect x="1277.00" y="500.13" width="1.00" height="17.07" fill="#e2e2e2"/>
<rect x="1350.00" y="500.13" width="1.00" height="17.07" fill="#e2e2e2"/>
<rect x="510.00" y="534.27" width="1.00" height="17.07" fill="#e2e2e2"/>
<rect x="580.00" y="534.27" width="1.00" height="17.07" fill="#e2e2e2"/>
<rect x="649.00" y="534.27" width="1.00" height="17.07" fill="#e2e2e2"/>
<rect x="719.00" y="534.27" width="1.00" height="17.07" fill="#e2e2e2"/>
<rect x="788.00" y="534.27" width="1.00" height="17.07" fill="#e2e2e2"/>
<rect x="858.00" y="534.27" width="1.00" height="17.07" fill="#e2e2e2"/>
<rect x="928.00" y="534.27" width="1.00" height="17.07" fill="#e2e2e2"/>
<rect x="997.00" y="534.27" width="1.00" height="17.07" fill="#e2e2e2"/>
<rect x="1067.00" y="534.27" width="1.00" height="17.07" fill="#e2e2e2"/>
<rect x="1137.00" y="534.27" width="1.00" height="17.07" fill="#e2e2e2"/>
<rect x="1207.00" y="534.27" width="1.00" height="17.07" fill="#e2e2e2"/>
<rect x="1277.00" y="534.27" width="1.00" height="17.07" fill="#e2e2e2"/>
<rect x="1350.00" y="534.27" width="1.00" height="17.07" fill="#e2e2e2"/>
<rect x="4.00" y="312.00" width="2.60" height="1.00" fill="#d0d0d0"/>
<rect x="4.00" y="346.00" width="2.60" height="1.00" fill="#d0d0d0"/>
<rect x="4.00" y="363.00" width="2.60" height="1.00" fill="#d0d0d0"/>
<rect x="4.00" y="380.00" width="2.60" height="1.00" fill="#d0d0d0"/>
<rect x="4.00" y="397.00" width="2.60" height="1.00" fill="#d0d0d0"/>
<rect x="4.00" y="414.00" width="2.60" height="1.00" fill="#d0d0d0"/>
<rect x="4.00" y="431.00" width="2.60" height="1.00" fill="#d0d0d0"/>
<rect x="4.00" y="448.00" width="2.60" height="1.00" fill="#d0d0d0"/>
<rect x="4.00" y="465.00" width="2.60" height="1.00" fill="#d0d0d0"/>
<rect x="4.00" y="483.00" width="2.60" height="1.00" fill="#d0d0d0"/>
<rect x="4.00" y="500.00" width="2.60" height="1.00" fill="#d0d0d0"/>
<rect x="4.00" y="517.00" width="2.60" height="1.00" fill="#d0d0d0"/>
<rect x="4.00" y="534.00" width="2.60" height="1.00" fill="#d0d0d0"/>
<rect x="4.00" y="551.00" width="2.60" height="1.00" fill="#d0d0d0"/>
<text x="9.02" y="343.50" font-size="12" textLength="192.12" lengthAdjust="spacingAndGlyphs" fill="#000" font-weight="bold">Due from Fund A Opening Balance</text>
<text x="446.97" y="343.50" font-size="12" textLength="56.49" lengthAdjust="spacingAndGlyphs" fill="#000">$ 1,000.00</text>
<text x="516.97" y="343.50" font-size="12" textLength="56.49" lengthAdjust="spacingAndGlyphs" fill="#000">$ 1,060.00</text>
<text x="586.47" y="343.50" font-size="12" textLength="56.49" lengthAdjust="spacingAndGlyphs" fill="#000">$ 1,100.00</text>
<text x="655.97" y="343.50" font-size="12" textLength="56.49" lengthAdjust="spacingAndGlyphs" fill="#000">$ 1,215.00</text>
<text x="725.47" y="343.50" font-size="12" textLength="56.49" lengthAdjust="spacingAndGlyphs" fill="#000">$ 1,350.00</text>
<text x="794.97" y="343.50" font-size="12" textLength="56.49" lengthAdjust="spacingAndGlyphs" fill="#000">$ 1,378.00</text>
<text x="864.97" y="343.50" font-size="12" textLength="56.49" lengthAdjust="spacingAndGlyphs" fill="#000">$ 1,631.00</text>
<text x="934.47" y="343.50" font-size="12" textLength="56.49" lengthAdjust="spacingAndGlyphs" fill="#000">$ 1,921.00</text>
<text x="1003.97" y="343.50" font-size="12" textLength="56.49" lengthAdjust="spacingAndGlyphs" fill="#000">$ 1,947.00</text>
<text x="1074.47" y="343.50" font-size="12" textLength="56.49" lengthAdjust="spacingAndGlyphs" fill="#000">$ 2,001.00</text>
<text x="1143.97" y="343.50" font-size="12" textLength="56.49" lengthAdjust="spacingAndGlyphs" fill="#000">$ 2,220.00</text>
<text x="1213.97" y="343.50" font-size="12" textLength="56.49" lengthAdjust="spacingAndGlyphs" fill="#000">$ 2,450.00</text>
<text x="1283.61" y="343.50" font-size="12" textLength="5.77" lengthAdjust="spacingAndGlyphs" fill="#000" font-weight="bold">$</text>
<text x="1295.36" y="343.50" font-size="12" textLength="47.64" lengthAdjust="spacingAndGlyphs" fill="#000" font-weight="bold">1,000.00</text>
<text x="16.94" y="360.50" font-size="12" textLength="37.91" lengthAdjust="spacingAndGlyphs" fill="#000">Fund A</text>
<text x="144.77" y="360.50" font-size="12" textLength="19.81" lengthAdjust="spacingAndGlyphs" fill="#000">XYZ</text>
<text x="221.96" y="360.50" font-size="12" textLength="15.49" lengthAdjust="spacingAndGlyphs" fill="#000">CD</text>
<text x="266.73" y="360.50" font-size="12" textLength="56.81" lengthAdjust="spacingAndGlyphs" fill="#000">Audit Fees</text>
<text x="1098.02" y="360.50" font-size="12" textLength="31.59" lengthAdjust="spacingAndGlyphs" fill="#000" font-style="italic">$39.0</text>
<text x="1313.15" y="360.50" font-size="12" textLength="30.60" lengthAdjust="spacingAndGlyphs" fill="#000" font-weight="bold">39.00</text>
<text x="16.94" y="377.50" font-size="12" textLength="37.91" lengthAdjust="spacingAndGlyphs" fill="#000">Fund A</text>
<text x="144.77" y="377.50" font-size="12" textLength="19.81" lengthAdjust="spacingAndGlyphs" fill="#000">XYZ</text>
<text x="222.27" y="377.50" font-size="12" textLength="13.80" lengthAdjust="spacingAndGlyphs" fill="#000">XY</text>
<text x="266.48" y="377.50" font-size="12" textLength="85.90" lengthAdjust="spacingAndGlyphs" fill="#000">Tax Preparation</text>
<text x="679.52" y="377.50" font-size="12" textLength="31.59" lengthAdjust="spacingAndGlyphs" fill="#000" font-style="italic">$75.0</text>
<text x="749.02" y="377.50" font-size="12" textLength="31.59" lengthAdjust="spacingAndGlyphs" fill="#000" font-style="italic">$28.0</text>
<text x="958.02" y="377.50" font-size="12" textLength="31.59" lengthAdjust="spacingAndGlyphs" fill="#000" font-style="italic">$26.0</text>
<text x="1306.30" y="377.50" font-size="12" textLength="37.45" lengthAdjust="spacingAndGlyphs" fill="#000" font-weight="bold">129.00</text>
<text x="16.94" y="394.50" font-size="12" textLength="37.91" lengthAdjust="spacingAndGlyphs" fill="#000">Fund A</text>
<text x="144.77" y="394.50" font-size="12" textLength="19.81" lengthAdjust="spacingAndGlyphs" fill="#000">XYZ</text>
<text x="222.48" y="394.50" font-size="12" textLength="14.95" lengthAdjust="spacingAndGlyphs" fill="#000">AB</text>
<text x="266.73" y="394.50" font-size="12" textLength="62.99" lengthAdjust="spacingAndGlyphs" fill="#000">Admin Fees</text>
<text x="818.52" y="394.50" font-size="12" textLength="31.59" lengthAdjust="spacingAndGlyphs" fill="#000" font-style="italic">$95.0</text>
<text x="881.36" y="394.50" font-size="12" textLength="38.75" lengthAdjust="spacingAndGlyphs" fill="#000" font-style="italic">$290.0</text>
<text x="1027.52" y="394.50" font-size="12" textLength="31.59" lengthAdjust="spacingAndGlyphs" fill="#000" font-style="italic">$54.0</text>
<text x="1090.86" y="394.50" font-size="12" textLength="38.75" lengthAdjust="spacingAndGlyphs" fill="#000" font-style="italic">$180.0</text>
<text x="1160.36" y="394.50" font-size="12" textLength="38.75" lengthAdjust="spacingAndGlyphs" fill="#000" font-style="italic">$230.0</text>
<text x="1237.52" y="394.50" font-size="12" textLength="31.59" lengthAdjust="spacingAndGlyphs" fill="#000" font-style="italic">$65.0</text>
<text x="1306.48" y="394.50" font-size="12" textLength="37.27" lengthAdjust="spacingAndGlyphs" fill="#000" font-weight="bold">914.00</text>
<text x="16.94" y="411.50" font-size="12" textLength="37.91" lengthAdjust="spacingAndGlyphs" fill="#000">Fund A</text>
<text x="144.77" y="411.50" font-size="12" textLength="19.81" lengthAdjust="spacingAndGlyphs" fill="#000">XYZ</text>
<text x="221.96" y="411.50" font-size="12" textLength="15.49" lengthAdjust="spacingAndGlyphs" fill="#000">CD</text>
<text x="266.13" y="411.50" font-size="12" textLength="152.69" lengthAdjust="spacingAndGlyphs" fill="#000">Consulting - Tax/Accounting</text>
<text x="610.02" y="411.50" font-size="12" textLength="31.59" lengthAdjust="spacingAndGlyphs" fill="#000" font-style="italic">$90.0</text>
<text x="1313.24" y="411.50" font-size="12" textLength="30.51" lengthAdjust="spacingAndGlyphs" fill="#000" font-weight="bold">90.00</text>
<text x="16.94" y="428.50" font-size="12" textLength="37.91" lengthAdjust="spacingAndGlyphs" fill="#000">Fund A</text>
<text x="144.77" y="428.50" font-size="12" textLength="19.81" lengthAdjust="spacingAndGlyphs" fill="#000">XYZ</text>
<text x="222.27" y="428.50" font-size="12" textLength="13.80" lengthAdjust="spacingAndGlyphs" fill="#000">XY</text>
<text x="265.81" y="428.50" font-size="12" textLength="56.21" lengthAdjust="spacingAndGlyphs" fill="#000">Filing Fees</text>
<text x="470.52" y="428.50" font-size="12" textLength="31.59" lengthAdjust="spacingAndGlyphs" fill="#000" font-style="italic">$60.0</text>
<text x="610.02" y="428.50" font-size="12" textLength="31.59" lengthAdjust="spacingAndGlyphs" fill="#000" font-style="italic">$25.0</text>
<text x="1312.94" y="428.50" font-size="12" textLength="30.81" lengthAdjust="spacingAndGlyphs" fill="#000" font-weight="bold">85.00</text>
<text x="16.94" y="445.50" font-size="12" textLength="37.91" lengthAdjust="spacingAndGlyphs" fill="#000">Fund A</text>
<text x="144.98" y="445.50" font-size="12" textLength="22.19" lengthAdjust="spacingAndGlyphs" fill="#000">ABC</text>
<text x="222.48" y="445.50" font-size="12" textLength="14.95" lengthAdjust="spacingAndGlyphs" fill="#000">AB</text>
<text x="266.15" y="445.50" font-size="12" textLength="91.98" lengthAdjust="spacingAndGlyphs" fill="#000">Custody expense</text>
<text x="679.52" y="445.50" font-size="12" textLength="31.59" lengthAdjust="spacingAndGlyphs" fill="#000" font-style="italic">$60.0</text>
<text x="818.52" y="445.50" font-size="12" textLength="31.59" lengthAdjust="spacingAndGlyphs" fill="#000" font-style="italic">$86.0</text>
<text x="1306.30" y="445.50" font-size="12" textLength="37.45" lengthAdjust="spacingAndGlyphs" fill="#000" font-weight="bold">146.00</text>
<text x="16.94" y="462.50" font-size="12" textLength="37.91" lengthAdjust="spacingAndGlyphs" fill="#000">Fund A</text>
<text x="144.98" y="462.50" font-size="12" textLength="22.19" lengthAdjust="spacingAndGlyphs" fill="#000">ABC</text>
<text x="221.96" y="462.50" font-size="12" textLength="15.49" lengthAdjust="spacingAndGlyphs" fill="#000">CD</text>
<text x="266.00" y="462.50" font-size="12" textLength="37.15" lengthAdjust="spacingAndGlyphs" fill="#000">(blank)</text>
<text x="540.52" y="462.50" font-size="12" textLength="31.59" lengthAdjust="spacingAndGlyphs" fill="#000" font-style="italic">$15.0</text>
<text x="1313.06" y="462.50" font-size="12" textLength="30.70" lengthAdjust="spacingAndGlyphs" fill="#000" font-weight="bold">15.00</text>
<text x="16.94" y="479.50" font-size="12" textLength="37.91" lengthAdjust="spacingAndGlyphs" fill="#000">Fund A</text>
<text x="144.98" y="479.50" font-size="12" textLength="22.19" lengthAdjust="spacingAndGlyphs" fill="#000">ABC</text>
<text x="222.27" y="479.50" font-size="12" textLength="13.80" lengthAdjust="spacingAndGlyphs" fill="#000">XY</text>
<text x="265.69" y="479.50" font-size="12" textLength="21.54" lengthAdjust="spacingAndGlyphs" fill="#000">N/A</text>
<text x="540.52" y="479.50" font-size="12" textLength="31.59" lengthAdjust="spacingAndGlyphs" fill="#000" font-style="italic">$25.0</text>
<text x="1312.96" y="479.50" font-size="12" textLength="30.79" lengthAdjust="spacingAndGlyphs" fill="#000" font-weight="bold">25.00</text>
<text x="16.94" y="496.50" font-size="12" textLength="37.91" lengthAdjust="spacingAndGlyphs" fill="#000">Fund A</text>
<text x="144.98" y="496.50" font-size="12" textLength="22.19" lengthAdjust="spacingAndGlyphs" fill="#000">ABC</text>
<text x="222.48" y="496.50" font-size="12" textLength="14.95" lengthAdjust="spacingAndGlyphs" fill="#000">AB</text>
<text x="266.48" y="496.50" font-size="12" textLength="180.38" lengthAdjust="spacingAndGlyphs" fill="#000">Travel &amp; Entertainment Expenses</text>
<text x="818.52" y="496.50" font-size="12" textLength="31.59" lengthAdjust="spacingAndGlyphs" fill="#000" font-style="italic">$72.0</text>
<text x="1312.94" y="496.50" font-size="12" textLength="30.81" lengthAdjust="spacingAndGlyphs" fill="#000" font-weight="bold">72.00</text>
<text x="17.29" y="513.50" font-size="12" textLength="71.51" lengthAdjust="spacingAndGlyphs" fill="#000" font-weight="bold" font-style="italic">Fund A Total</text>
<text x="447.06" y="513.50" font-size="12" textLength="5.50" lengthAdjust="spacingAndGlyphs" fill="#000" font-style="italic">$</text>
<text x="473.38" y="513.50" font-size="12" textLength="30.47" lengthAdjust="spacingAndGlyphs" fill="#000" font-style="italic">60.00</text>
<text x="517.06" y="513.50" font-size="12" textLength="5.50" lengthAdjust="spacingAndGlyphs" fill="#000" font-style="italic">$</text>
<text x="543.64" y="513.50" font-size="12" textLength="30.21" lengthAdjust="spacingAndGlyphs" fill="#000" font-style="italic">40.00</text>
<text x="587.06" y="513.50" font-size="12" textLength="5.50" lengthAdjust="spacingAndGlyphs" fill="#000" font-style="italic">$</text>
<text x="607.22" y="513.50" font-size="12" textLength="36.12" lengthAdjust="spacingAndGlyphs" fill="#000" font-style="italic">115.00</text>
<text x="656.56" y="513.50" font-size="12" textLength="5.50" lengthAdjust="spacingAndGlyphs" fill="#000" font-style="italic">$</text>
<text x="676.72" y="513.50" font-size="12" textLength="36.12" lengthAdjust="spacingAndGlyphs" fill="#000" font-style="italic">135.00</text>
<text x="726.06" y="513.50" font-size="12" textLength="5.50" lengthAdjust="spacingAndGlyphs" fill="#000" font-style="italic">$</text>
<text x="752.30" y="513.50" font-size="12" textLength="30.05" lengthAdjust="spacingAndGlyphs" fill="#000" font-style="italic">28.00</text>
<text x="795.56" y="513.50" font-size="12" textLength="5.50" lengthAdjust="spacingAndGlyphs" fill="#000" font-style="italic">$</text>
<text x="815.04" y="513.50" font-size="12" textLength="36.81" lengthAdjust="spacingAndGlyphs" fill="#000" font-style="italic">253.00</text>
<text x="865.06" y="513.50" font-size="12" textLength="5.50" lengthAdjust="spacingAndGlyphs" fill="#000" font-style="italic">$</text>
<text x="885.04" y="513.50" font-size="12" textLength="36.81" lengthAdjust="spacingAndGlyphs" fill="#000" font-style="italic">290.00</text>
<text x="935.06" y="513.50" font-size="12" textLength="5.50" lengthAdjust="spacingAndGlyphs" fill="#000" font-style="italic">$</text>
<text x="961.30" y="513.50" font-size="12" textLength="30.05" lengthAdjust="spacingAndGlyphs" fill="#000" font-style="italic">26.00</text>
<text x="1004.56" y="513.50" font-size="12" textLength="5.50" lengthAdjust="spacingAndGlyphs" fill="#000" font-style="italic">$</text>
<text x="1030.57" y="513.50" font-size="12" textLength="30.28" lengthAdjust="spacingAndGlyphs" fill="#000" font-style="italic">54.00</text>
<text x="1074.06" y="513.50" font-size="12" textLength="5.50" lengthAdjust="spacingAndGlyphs" fill="#000" font-style="italic">$</text>
<text x="1094.54" y="513.50" font-size="12" textLength="36.81" lengthAdjust="spacingAndGlyphs" fill="#000" font-style="italic">219.00</text>
<text x="1144.56" y="513.50" font-size="12" textLength="5.50" lengthAdjust="spacingAndGlyphs" fill="#000" font-style="italic">$</text>
<text x="1164.04" y="513.50" font-size="12" textLength="36.81" lengthAdjust="spacingAndGlyphs" fill="#000" font-style="italic">230.00</text>
<text x="1214.06" y="513.50" font-size="12" textLength="5.50" lengthAdjust="spacingAndGlyphs" fill="#000" font-style="italic">$</text>
<text x="1240.38" y="513.50" font-size="12" textLength="30.47" lengthAdjust="spacingAndGlyphs" fill="#000" font-style="italic">65.00</text>
<text x="1283.81" y="513.50" font-size="12" textLength="5.85" lengthAdjust="spacingAndGlyphs" fill="#000" font-weight="bold" font-style="italic">$</text>
<text x="1296.75" y="513.50" font-size="12" textLength="46.62" lengthAdjust="spacingAndGlyphs" fill="#000" font-weight="bold" font-style="italic">1,515.00</text>
<path d="M440,501 L446,501 L440,507 Z" fill="#1e8a3c"/>
<text x="8.99" y="547.50" font-size="12" textLength="184.65" lengthAdjust="spacingAndGlyphs" fill="#000" font-weight="bold">Due from Fund A Closing Balance</text>
<text x="446.97" y="547.50" font-size="12" textLength="56.49" lengthAdjust="spacingAndGlyphs" fill="#000">$ 1,060.00</text>
<text x="516.97" y="547.50" font-size="12" textLength="56.49" lengthAdjust="spacingAndGlyphs" fill="#000">$ 1,100.00</text>
<text x="586.47" y="547.50" font-size="12" textLength="56.49" lengthAdjust="spacingAndGlyphs" fill="#000">$ 1,215.00</text>
<text x="655.97" y="547.50" font-size="12" textLength="56.49" lengthAdjust="spacingAndGlyphs" fill="#000">$ 1,350.00</text>
<text x="725.47" y="547.50" font-size="12" textLength="56.49" lengthAdjust="spacingAndGlyphs" fill="#000">$ 1,378.00</text>
<text x="794.97" y="547.50" font-size="12" textLength="56.49" lengthAdjust="spacingAndGlyphs" fill="#000">$ 1,631.00</text>
<text x="864.97" y="547.50" font-size="12" textLength="56.49" lengthAdjust="spacingAndGlyphs" fill="#000">$ 1,921.00</text>
<text x="934.47" y="547.50" font-size="12" textLength="56.49" lengthAdjust="spacingAndGlyphs" fill="#000">$ 1,947.00</text>
<text x="1003.97" y="547.50" font-size="12" textLength="56.49" lengthAdjust="spacingAndGlyphs" fill="#000">$ 2,001.00</text>
<text x="1074.47" y="547.50" font-size="12" textLength="56.49" lengthAdjust="spacingAndGlyphs" fill="#000">$ 2,220.00</text>
<text x="1143.97" y="547.50" font-size="12" textLength="56.49" lengthAdjust="spacingAndGlyphs" fill="#000">$ 2,450.00</text>
<text x="1213.97" y="547.50" font-size="12" textLength="56.49" lengthAdjust="spacingAndGlyphs" fill="#000">$ 2,515.00</text>
<text x="1283.61" y="547.50" font-size="12" textLength="5.77" lengthAdjust="spacingAndGlyphs" fill="#000" font-weight="bold">$</text>
<text x="1296.01" y="547.50" font-size="12" textLength="47.74" lengthAdjust="spacingAndGlyphs" fill="#000" font-weight="bold">2,515.00</text>
<rect x="2.00" y="578.20" width="1354.00" height="153.40" fill="#d6d6d6"/>
<rect x="4.00" y="580.20" width="1349.70" height="149.60" fill="#ffffff"/>
<rect x="4.00" y="580.20" width="1349.70" height="2.00" fill="#efefef"/>
<rect x="4.00" y="580.20" width="2.00" height="149.60" fill="#efefef"/>
<rect x="70.00" y="580.20" width="1.00" height="2.00" fill="#d0d0d0"/>
<rect x="266.00" y="580.20" width="1.00" height="2.00" fill="#d0d0d0"/>
<rect x="392.00" y="580.20" width="1.00" height="2.00" fill="#d0d0d0"/>
<rect x="510.00" y="580.20" width="1.00" height="2.00" fill="#d0d0d0"/>
<rect x="657.00" y="580.20" width="1.00" height="2.00" fill="#d0d0d0"/>
<rect x="822.00" y="580.20" width="1.00" height="2.00" fill="#d0d0d0"/>
<rect x="951.00" y="580.20" width="1.00" height="2.00" fill="#d0d0d0"/>
<rect x="1035.00" y="580.20" width="1.00" height="2.00" fill="#d0d0d0"/>
<rect x="1098.00" y="580.20" width="1.00" height="2.00" fill="#d0d0d0"/>
<rect x="1222.00" y="580.20" width="1.00" height="2.00" fill="#d0d0d0"/>
<rect x="1351.00" y="580.20" width="1.00" height="2.00" fill="#d0d0d0"/>
<rect x="5.00" y="580.20" width="1.00" height="149.40" fill="#c8c8c8"/>
<rect x="4.20" y="605.50" width="1.60" height="24.00" fill="#7fc49a"/>
<rect x="6.10" y="582.20" width="1345.20" height="23.30" fill="#ffb3be"/>
<rect x="4.00" y="605.00" width="1.80" height="1.00" fill="#d0d0d0"/>
<rect x="4.00" y="725.00" width="1.80" height="1.00" fill="#d0d0d0"/>
<rect x="4.00" y="582.00" width="1.80" height="1.00" fill="#d0d0d0"/>
<rect x="6.10" y="629.00" width="1345.15" height="1.00" fill="#d4d4d4"/>
<rect x="4.00" y="629.00" width="1.80" height="1.00" fill="#d0d0d0"/>
<rect x="6.10" y="653.00" width="1345.15" height="1.00" fill="#d4d4d4"/>
<rect x="4.00" y="653.00" width="1.80" height="1.00" fill="#d0d0d0"/>
<rect x="6.10" y="677.00" width="1345.15" height="1.00" fill="#d4d4d4"/>
<rect x="4.00" y="677.00" width="1.80" height="1.00" fill="#d0d0d0"/>
<rect x="6.10" y="701.00" width="1345.15" height="1.00" fill="#d4d4d4"/>
<rect x="4.00" y="701.00" width="1.80" height="1.00" fill="#d0d0d0"/>
<text x="8.74" y="600.80" font-size="17" textLength="38.81" lengthAdjust="spacingAndGlyphs" fill="#000" font-weight="bold">Fund</text>
<text x="72.32" y="600.80" font-size="17" textLength="131.23" lengthAdjust="spacingAndGlyphs" fill="#000" font-weight="bold">Transaction Date</text>
<text x="272.66" y="600.80" font-size="17" textLength="116.65" lengthAdjust="spacingAndGlyphs" fill="#000" font-weight="bold">Reporting Date</text>
<text x="398.07" y="600.80" font-size="17" textLength="109.59" lengthAdjust="spacingAndGlyphs" fill="#000" font-weight="bold">Transaction ID</text>
<text x="514.32" y="600.80" font-size="17" textLength="140.74" lengthAdjust="spacingAndGlyphs" fill="#000" font-weight="bold">Transaction Name</text>
<text x="656.82" y="600.80" font-size="17" textLength="157.13" lengthAdjust="spacingAndGlyphs" fill="#000" font-weight="bold">Transaction Amount</text>
<text x="825.08" y="600.80" font-size="17" textLength="84.85" lengthAdjust="spacingAndGlyphs" fill="#000" font-weight="bold">Comments</text>
<text x="953.41" y="600.80" font-size="17" textLength="79.15" lengthAdjust="spacingAndGlyphs" fill="#000" font-weight="bold">Reference</text>
<text x="1037.39" y="600.80" font-size="17" textLength="57.11" lengthAdjust="spacingAndGlyphs" fill="#000" font-weight="bold">Vendor</text>
<text x="1100.11" y="600.80" font-size="17" textLength="119.35" lengthAdjust="spacingAndGlyphs" fill="#000" font-weight="bold">Deal/Comment</text>
<text x="1223.90" y="600.80" font-size="17" textLength="123.10" lengthAdjust="spacingAndGlyphs" fill="#000" font-weight="bold">Invoice Number</text>
<text x="8.45" y="625.30" font-size="17" textLength="53.09" lengthAdjust="spacingAndGlyphs" fill="#000">Fund A</text>
<text x="75.44" y="625.30" font-size="17" textLength="188.98" lengthAdjust="spacingAndGlyphs" fill="#000">12/31/2021 12:00:00 AM</text>
<text x="301.15" y="625.30" font-size="17" textLength="88.46" lengthAdjust="spacingAndGlyphs" fill="#000">12/31/2021</text>
<text x="514.47" y="625.30" font-size="17" textLength="88.23" lengthAdjust="spacingAndGlyphs" fill="#000">Admin Fees</text>
<text x="771.99" y="625.30" font-size="17" textLength="42.42" lengthAdjust="spacingAndGlyphs" fill="#000">10.00</text>
<text x="825.72" y="625.30" font-size="17" textLength="88.23" lengthAdjust="spacingAndGlyphs" fill="#000">Admin Fees</text>
<text x="953.71" y="625.30" font-size="17" textLength="64.11" lengthAdjust="spacingAndGlyphs" fill="#000">Q4 2021</text>
<text x="1037.47" y="625.30" font-size="17" textLength="20.94" lengthAdjust="spacingAndGlyphs" fill="#000">AB</text>
<text x="1280.75" y="625.30" font-size="17" textLength="8.83" lengthAdjust="spacingAndGlyphs" fill="#13861f" font-style="italic">2</text>
<text x="8.46" y="649.15" font-size="17" textLength="52.52" lengthAdjust="spacingAndGlyphs" fill="#000">Fund B</text>
<text x="75.44" y="649.15" font-size="17" textLength="188.98" lengthAdjust="spacingAndGlyphs" fill="#000">12/31/2021 12:00:00 AM</text>
<text x="301.15" y="649.15" font-size="17" textLength="88.46" lengthAdjust="spacingAndGlyphs" fill="#000">12/31/2021</text>
<text x="514.12" y="649.15" font-size="17" textLength="120.31" lengthAdjust="spacingAndGlyphs" fill="#000">Tax Preparation</text>
<text x="771.65" y="649.15" font-size="17" textLength="42.77" lengthAdjust="spacingAndGlyphs" fill="#000">20.00</text>
<text x="825.37" y="649.15" font-size="17" textLength="120.31" lengthAdjust="spacingAndGlyphs" fill="#000">Tax Preparation</text>
<text x="953.71" y="649.15" font-size="17" textLength="64.11" lengthAdjust="spacingAndGlyphs" fill="#000">Q4 2021</text>
<text x="1036.74" y="649.15" font-size="17" textLength="21.69" lengthAdjust="spacingAndGlyphs" fill="#000">CD</text>
<text x="1281.42" y="649.15" font-size="17" textLength="8.00" lengthAdjust="spacingAndGlyphs" fill="#13861f" font-style="italic">1</text>
<text x="8.49" y="673.00" font-size="17" textLength="52.48" lengthAdjust="spacingAndGlyphs" fill="#000">Fund C</text>
<text x="75.44" y="673.00" font-size="17" textLength="188.98" lengthAdjust="spacingAndGlyphs" fill="#000">12/31/2021 12:00:00 AM</text>
<text x="301.15" y="673.00" font-size="17" textLength="88.46" lengthAdjust="spacingAndGlyphs" fill="#000">12/31/2021</text>
<text x="514.47" y="673.00" font-size="17" textLength="88.23" lengthAdjust="spacingAndGlyphs" fill="#000">Admin Fees</text>
<text x="771.89" y="673.00" font-size="17" textLength="42.53" lengthAdjust="spacingAndGlyphs" fill="#000">30.00</text>
<text x="825.72" y="673.00" font-size="17" textLength="88.23" lengthAdjust="spacingAndGlyphs" fill="#000">Admin Fees</text>
<text x="953.71" y="673.00" font-size="17" textLength="64.11" lengthAdjust="spacingAndGlyphs" fill="#000">Q4 2021</text>
<text x="1037.17" y="673.00" font-size="17" textLength="19.33" lengthAdjust="spacingAndGlyphs" fill="#000">XY</text>
<text x="1280.44" y="673.00" font-size="17" textLength="8.88" lengthAdjust="spacingAndGlyphs" fill="#13861f" font-style="italic">3</text>
<text x="8.45" y="696.85" font-size="17" textLength="53.97" lengthAdjust="spacingAndGlyphs" fill="#000">Fund D</text>
<text x="75.44" y="696.85" font-size="17" textLength="188.98" lengthAdjust="spacingAndGlyphs" fill="#000">12/31/2021 12:00:00 AM</text>
<text x="301.15" y="696.85" font-size="17" textLength="88.46" lengthAdjust="spacingAndGlyphs" fill="#000">12/31/2021</text>
<text x="513.19" y="696.85" font-size="17" textLength="38.93" lengthAdjust="spacingAndGlyphs" fill="#000">Legal</text>
<text x="771.60" y="696.85" font-size="17" textLength="42.82" lengthAdjust="spacingAndGlyphs" fill="#000">40.00</text>
<text x="824.44" y="696.85" font-size="17" textLength="38.93" lengthAdjust="spacingAndGlyphs" fill="#000">Legal</text>
<text x="953.71" y="696.85" font-size="17" textLength="64.11" lengthAdjust="spacingAndGlyphs" fill="#000">Q4 2021</text>
<text x="1036.74" y="696.85" font-size="17" textLength="21.69" lengthAdjust="spacingAndGlyphs" fill="#000">CD</text>
<text x="1275.68" y="696.85" font-size="17" textLength="18.67" lengthAdjust="spacingAndGlyphs" fill="#13861f" font-style="italic">40</text>
<text x="8.50" y="720.70" font-size="17" textLength="51.29" lengthAdjust="spacingAndGlyphs" fill="#000">Fund E</text>
<text x="75.44" y="720.70" font-size="17" textLength="188.98" lengthAdjust="spacingAndGlyphs" fill="#000">12/31/2021 12:00:00 AM</text>
<text x="301.15" y="720.70" font-size="17" textLength="88.46" lengthAdjust="spacingAndGlyphs" fill="#000">12/31/2021</text>
<text x="513.19" y="720.70" font-size="17" textLength="38.93" lengthAdjust="spacingAndGlyphs" fill="#000">Legal</text>
<text x="771.84" y="720.70" font-size="17" textLength="42.58" lengthAdjust="spacingAndGlyphs" fill="#000">50.00</text>
<text x="824.44" y="720.70" font-size="17" textLength="38.93" lengthAdjust="spacingAndGlyphs" fill="#000">Legal</text>
<text x="953.71" y="720.70" font-size="17" textLength="64.11" lengthAdjust="spacingAndGlyphs" fill="#000">Q4 2021</text>
<text x="1037.17" y="720.70" font-size="17" textLength="19.33" lengthAdjust="spacingAndGlyphs" fill="#000">XY</text>
<text x="1275.65" y="720.70" font-size="17" textLength="18.95" lengthAdjust="spacingAndGlyphs" fill="#13861f" font-style="italic">49</text>
</svg></body></html>
